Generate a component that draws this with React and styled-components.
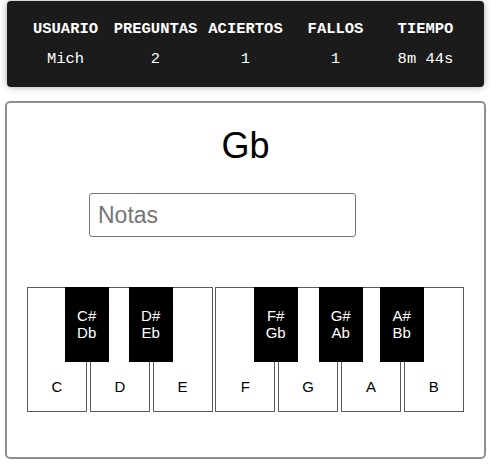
import React from 'react';
import styled, { createGlobalStyle } from 'styled-components';

const GlobalStyle = createGlobalStyle`
  body {
    margin: 0;
    background: #fff;
    font-family: "Liberation Sans", Arial, sans-serif;
  }
`;

const Page = styled.div`
  width: 481px;
  padding: 1px 0 0 5px;
`;

const ScoreBar = styled.div`
  margin: 0 2px;
  height: 86px;
  background: #1b1b1b;
  border-radius: 4px;
  box-shadow: 0 0 7px rgba(0, 0, 0, 0.35);
  display: grid;
  grid-template-columns: repeat(5, 90px);
  justify-content: center;
  align-content: center;
  row-gap: 12px;
  font-family: "Liberation Mono", "Courier New", monospace;
  font-size: 15.5px;
  line-height: 18px;
  color: #fff;
`;

const Cell = styled.div`
  text-align: center;
  white-space: nowrap;
  font-weight: ${(p) => (p.$head ? 'bold' : 'normal')};
`;

const Card = styled.div`
  margin-top: 14px;
  height: 358px;
  box-sizing: border-box;
  border: 2px solid #8f8f8f;
  border-radius: 5px;
  background: #fff;
  padding-top: 22px;
`;

const Title = styled.div`
  font-size: 36px;
  line-height: 41px;
  text-align: center;
  color: #000;
`;

const NoteInput = styled.input`
  display: block;
  margin: 27px 0 0 82px;
  width: 267px;
  height: 44px;
  box-sizing: border-box;
  border: 1px solid #767676;
  border-radius: 3px;
  padding: 0 8px;
  font-family: "Liberation Sans", Arial, sans-serif;
  font-size: 23px;
  outline: none;

  &::placeholder {
    color: #757575;
  }
`;

const Piano = styled.div`
  position: relative;
  margin: 50px 0 0 20px;
  display: flex;
  gap: 2.8px;
`;

const WhiteKey = styled.div`
  width: 60px;
  height: 125px;
  box-sizing: border-box;
  border: 1px solid #5a5a5a;
  background: #fff;
  display: flex;
  align-items: flex-end;
  justify-content: center;
  padding-bottom: 16px;
  font-size: 15px;
  color: #000;
`;

const BlackKey = styled.div`
  position: absolute;
  top: 0;
  width: 44px;
  height: 75px;
  box-sizing: border-box;
  background: #000;
  color: #fff;
  font-size: 15px;
  line-height: 17.3px;
  text-align: center;
  padding-top: 19.5px;
`;

const stats = [
  ['USUARIO', 'Mich'],
  ['PREGUNTAS', '2'],
  ['ACIERTOS', '1'],
  ['FALLOS', '1'],
  ['TIEMPO', '8m 44s'],
];

const whites = ['C', 'D', 'E', 'F', 'G', 'A', 'B'];

const blacks = [
  { left: 37.7, sharp: 'C#', flat: 'Db' },
  { left: 101.7, sharp: 'D#', flat: 'Eb' },
  { left: 226.7, sharp: 'F#', flat: 'Gb' },
  { left: 291.7, sharp: 'G#', flat: 'Ab' },
  { left: 352.7, sharp: 'A#', flat: 'Bb' },
];

export default function App() {
  return (
    <Page>
      <GlobalStyle />
      <ScoreBar>
        {stats.map(([h]) => (
          <Cell $head key={h}>{h}</Cell>
        ))}
        {stats.map(([h, v]) => (
          <Cell key={h + 'v'}>{v}</Cell>
        ))}
      </ScoreBar>
      <Card>
        <Title>Gb</Title>
        <NoteInput placeholder="Notas" />
        <Piano>
          {whites.map((n) => (
            <WhiteKey key={n}>{n}</WhiteKey>
          ))}
          {blacks.map((b) => (
            <BlackKey key={b.sharp} style={{ left: b.left }}>
              {b.sharp}
              <br />
              {b.flat}
            </BlackKey>
          ))}
        </Piano>
      </Card>
    </Page>
  );
}
